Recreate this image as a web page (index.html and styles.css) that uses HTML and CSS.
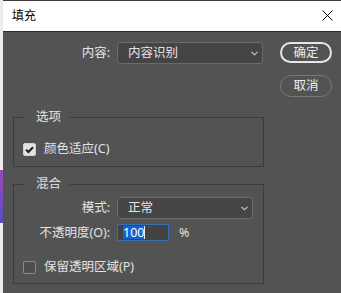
FILE: index.html
```html
<!DOCTYPE html>
<html lang="zh-CN">
<head>
<meta charset="utf-8">
<title>填充</title>
<link rel="stylesheet" href="styles.css">
</head>
<body>
<div class="window">
  <div class="edge">
    <div class="edge-top"></div>
    <div class="edge-purple"></div>
    <div class="edge-bottom"></div>
  </div>
  <div class="dialog">
    <div class="titlebar">
      <span class="title">填充</span>
      <svg class="close" width="11" height="11" viewBox="0 0 11 11"><path d="M0.5 0.5 L10.5 10.5 M10.5 0.5 L0.5 10.5" stroke="#000" stroke-width="1" fill="none"/></svg>
    </div>
    <div class="content">
      <div class="main">
        <div class="field">
          <span class="label">内容:</span>
          <div class="select wide"><span>内容识别</span><svg class="chev" width="7" height="5" viewBox="0 0 7 5"><path d="M0.5 0.8 L3.5 3.8 L6.5 0.8" stroke="#cfcfcf" stroke-width="1.1" fill="none"/></svg></div>
        </div>
        <fieldset class="group first">
          <legend>选项</legend>
          <div class="check-row">
            <span class="check checked"><svg width="13" height="13" viewBox="0 0 13 13"><path d="M3 6.6 L5.4 9 L10 4.2" stroke="#1e1e1e" stroke-width="2" fill="none"/></svg></span>
            <span class="check-label">颜色适应(C)</span>
          </div>
        </fieldset>
        <fieldset class="group second">
          <legend>混合</legend>
          <div class="field">
            <span class="label inner">模式:</span>
            <div class="select narrow"><span>正常</span><svg class="chev" width="7" height="5" viewBox="0 0 7 5"><path d="M0.5 0.8 L3.5 3.8 L6.5 0.8" stroke="#cfcfcf" stroke-width="1.1" fill="none"/></svg></div>
          </div>
          <div class="field opacity-row">
            <span class="label inner">不透明度(O):</span>
            <div class="input"><span class="sel">100</span><span class="caret"></span></div>
            <span class="percent">%</span>
          </div>
          <div class="check-row last">
            <span class="check"></span>
            <span class="check-label">保留透明区域(P)</span>
          </div>
        </fieldset>
      </div>
      <div class="buttons">
        <div class="btn primary">确定</div>
        <div class="btn secondary">取消</div>
      </div>
    </div>
  </div>
</div>
</body>
</html>
```
FILE: styles.css
```css
* { box-sizing: border-box; }
html, body { margin: 0; padding: 0; }
body {
  width: 341px;
  height: 293px;
  overflow: hidden;
  font-family: "Noto Sans", "Noto Sans CJK SC", sans-serif;
  font-size: 12.5px;
  background: #535353;
}
.window { display: flex; height: 293px; }
.edge { width: 3px; display: flex; flex-direction: column; }
.edge-top { height: 170px; background: #ececec; }
.edge-purple { height: 53px; background: linear-gradient(#9a48b8, #5a4dc2); }
.edge-bottom { flex: 1; background: #ececec; }
.dialog {
  flex: 1;
  display: flex;
  flex-direction: column;
  background: #535353;
  border-top: 1px solid #3e3e3e;
}
.titlebar {
  height: 31px;
  background: #fff;
  border-bottom: 1px solid #2b2b2b;
  display: flex;
  align-items: center;
  justify-content: space-between;
  padding: 0 8px 0 9px;
  color: #000;
  font-size: 12px;
  line-height: 16px;
}
.close { display: block; margin-top: -1px; }
.content {
  display: flex;
  padding: 10px 0 0 10px;
  color: #e4e4e4;
  line-height: 16px;
}
.main { width: 251px; display: flex; flex-direction: column; }
.field { display: flex; align-items: center; height: 22px; }
.label { width: 97px; text-align: right; margin-right: 7px; }
.label.inner { width: 96px; }
.select {
  height: 22px;
  background: #454545;
  border: 1px solid #6a6a6a;
  border-radius: 3px;
  display: flex;
  align-items: center;
  justify-content: space-between;
  padding: 0 4px 0 10px;
}
.select.wide { width: 146px; }
.select.narrow { width: 136px; }
.chev { display: block; }
.group {
  margin: 0;
  padding: 0;
  border: 1px solid #3c3c3c;
  min-inline-size: 0;
}
.group legend {
  margin-left: 11px;
  padding: 0 9px 0 11px;
  line-height: 16px;
}
.group.first { margin-top: 45px; padding: 16px 0 9px 0; }
.group.second { margin-top: 9px; padding: 5px 0 8px 0; }
.check-row { display: flex; align-items: center; height: 16px; padding-left: 9px; }
.check-row.last { margin-top: 18px; }
.check {
  width: 13px;
  height: 13px;
  border-radius: 2px;
  border: 1px solid #8a8a8a;
  background: #4e4e4e;
  display: block;
}
.check.checked { background: #e2e2e2; border-color: #d0d0d0; }
.check.checked svg { display: block; margin: -1px; }
.check-label { margin-left: 8px; }
.opacity-row { margin-top: 5px; height: 17px; }
.input {
  width: 52px;
  height: 17px;
  border: 1px solid #3a6cb2;
  background: #434343;
  padding-left: 5px;
  display: flex;
  align-items: center;
}
.sel { background: #1463d2; color: #fff; line-height: 13px; }
.caret { width: 1px; height: 13px; background: #e8e8e8; }
.percent { margin-left: 10px; }
.buttons {
  margin-left: 16px;
  width: 52px;
  display: flex;
  flex-direction: column;
  gap: 12px;
}
.btn {
  height: 21px;
  border-radius: 11px;
  display: flex;
  align-items: center;
  justify-content: center;
  color: #ececec;
}
.btn.primary { border: 2px solid #e6e6e6; }
.btn.secondary { border: 1px solid #777; height: 22px; }
```
